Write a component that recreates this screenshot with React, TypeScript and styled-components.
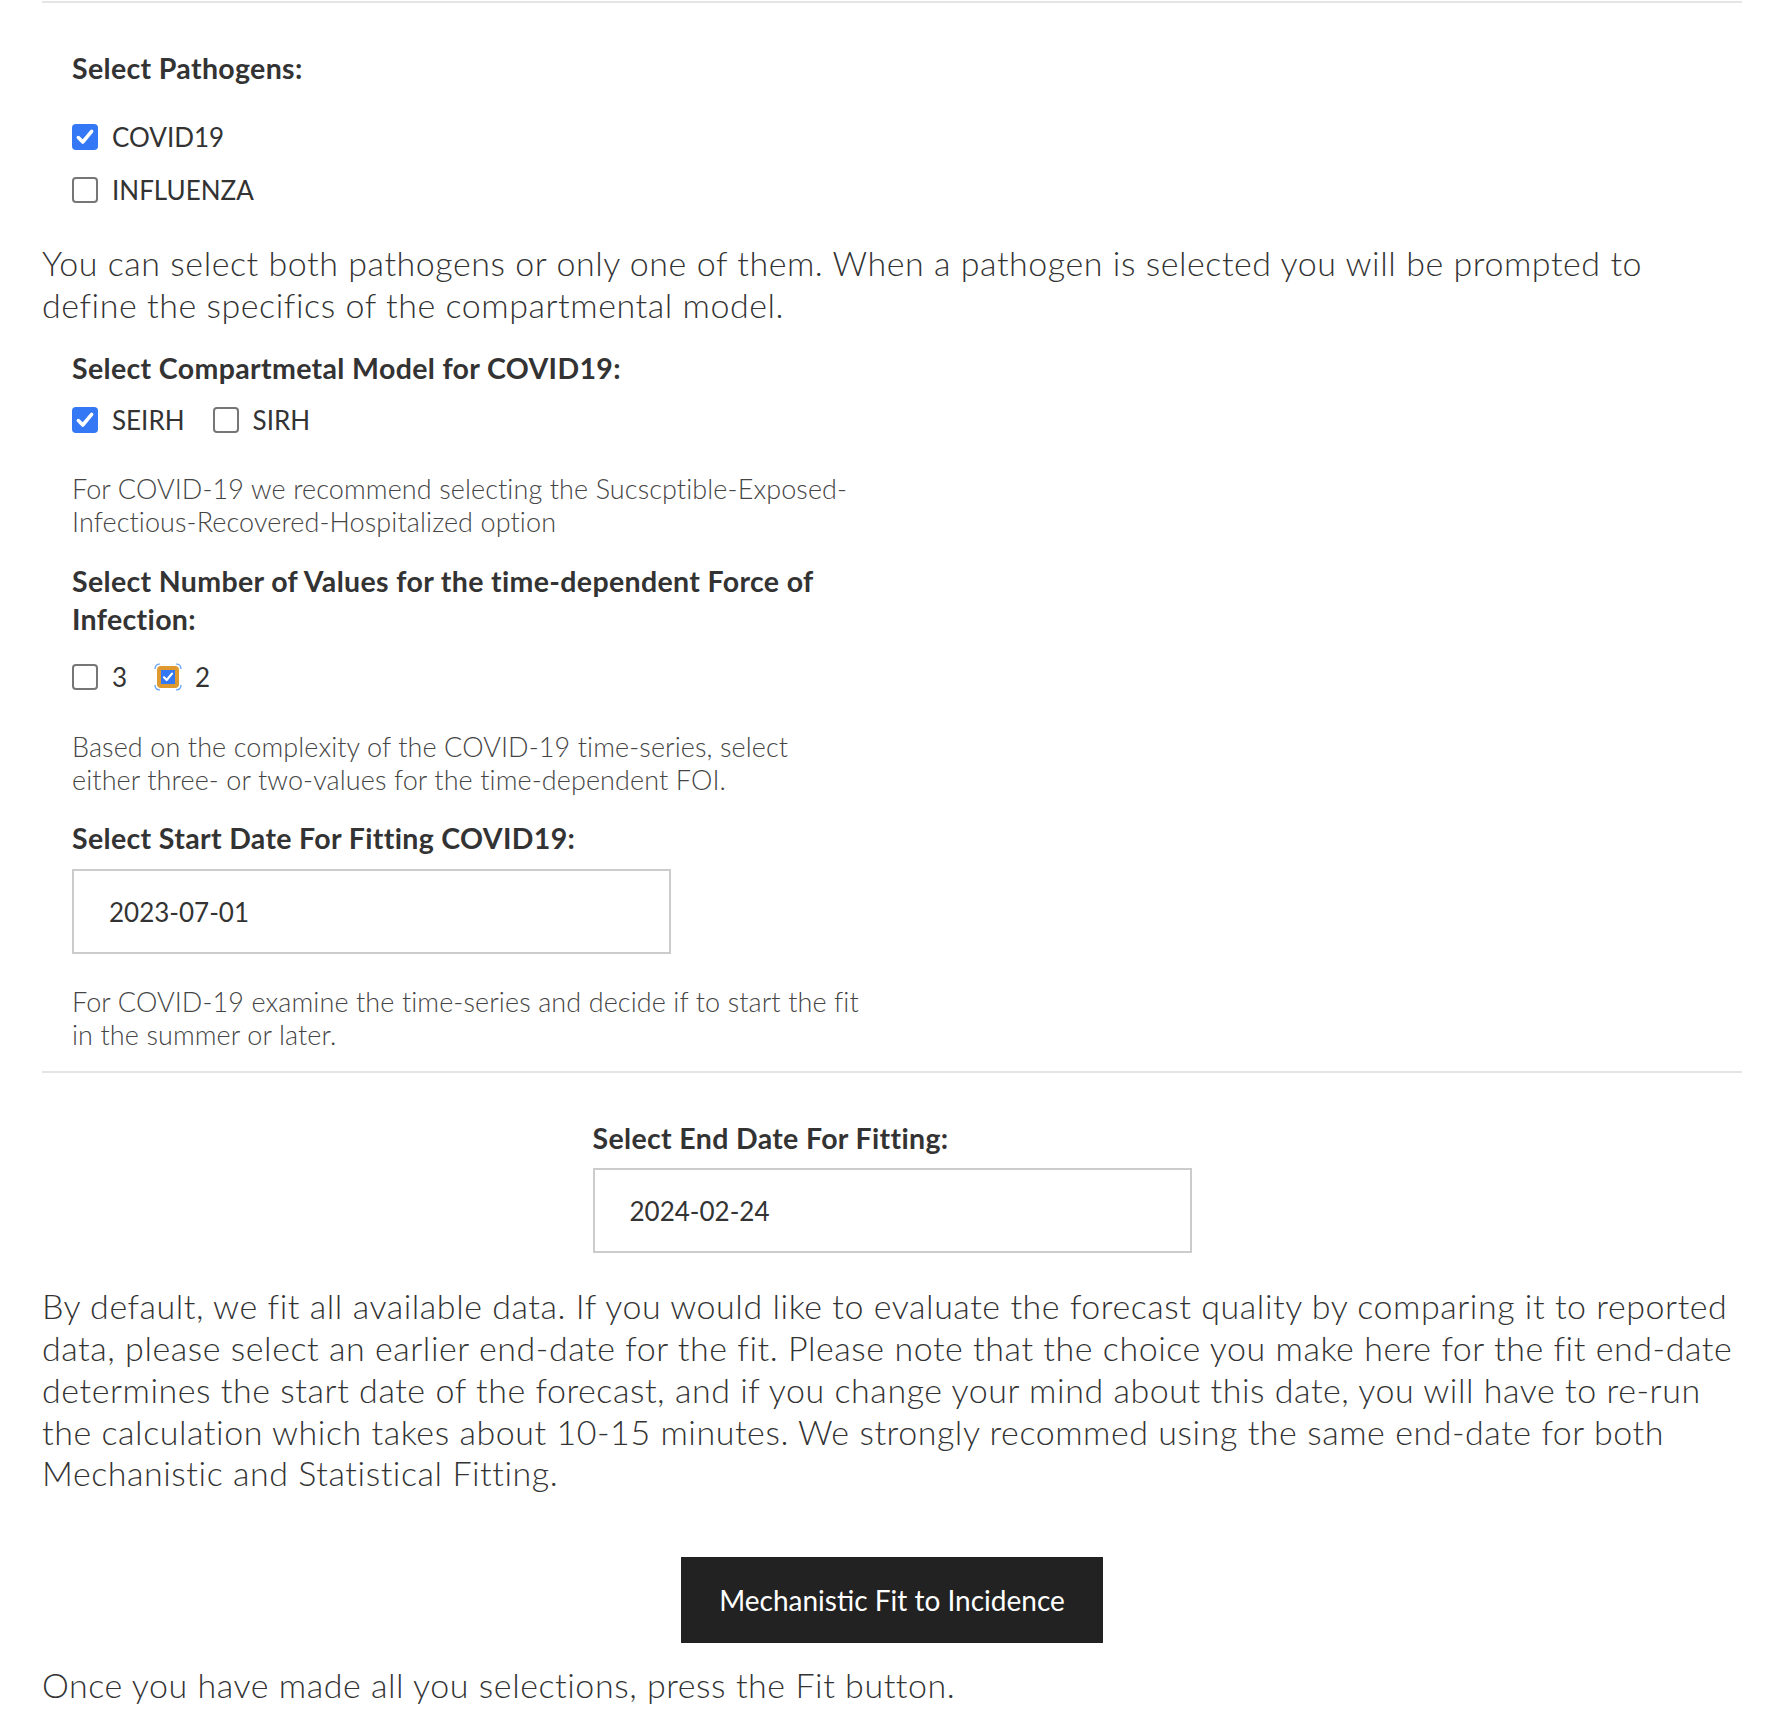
import React from "react";
import styled, { createGlobalStyle } from "styled-components";

const GlobalStyle = createGlobalStyle`
  html, body { margin: 0; padding: 0; background: #ffffff; }
  body { font-family: Lato, "Liberation Sans", sans-serif; color: #333333; }
  * { box-sizing: border-box; }
`;

const Page = styled.div`
  width: 1700px;
  margin-left: 42px;
  padding-top: 1px;
  padding-bottom: 8px;
`;

const Rule = styled.div<{ $mt: number }>`
  height: 2px;
  background: #e5e5e5;
  margin-top: ${(p) => p.$mt}px;
`;

const Panel = styled.div`
  padding-left: 30px;
  width: 880px;
`;

const Centered = styled.div`
  width: 599px;
  margin: 0 auto;
`;

const Heading = styled.div<{ $mt: number }>`
  font-weight: 700;
  font-size: 28.5px;
  letter-spacing: 0.35px;
  line-height: 38px;
  color: #333333;
  white-space: nowrap;
  margin-top: ${(p) => p.$mt}px;
`;

const Lead = styled.p<{ $mt: number }>`
  margin: ${(p) => p.$mt}px 0 0;
  font-weight: 300;
  font-size: 34px;
  letter-spacing: 0.55px;
  line-height: 41.7px;
  color: #333333;
  white-space: nowrap;
`;

const Note = styled.p<{ $mt: number }>`
  margin: ${(p) => p.$mt}px 0 0;
  font-weight: 300;
  font-size: 27px;
  letter-spacing: 0.1px;
  line-height: 33px;
  color: #454545;
  white-space: nowrap;
`;

const CheckList = styled.div<{ $mt: number; $inline?: boolean }>`
  display: flex;
  flex-direction: ${(p) => (p.$inline ? "row" : "column")};
  gap: ${(p) => (p.$inline ? "28px" : "13px")};
  margin-top: ${(p) => p.$mt}px;
`;

const CheckItem = styled.label`
  display: flex;
  align-items: center;
  gap: 14px;
  height: 40px;
  font-size: 26px;
  font-weight: 400;
  color: #333333;
`;

const Box = styled.span<{ $checked: boolean }>`
  position: relative;
  width: 26px;
  height: 26px;
  flex: none;
  border-radius: 4px;
  border: ${(p) => (p.$checked ? "none" : "2.5px solid #767676")};
  background: ${(p) => (p.$checked ? "#3478f6" : "#ffffff")};
  display: flex;
  align-items: center;
  justify-content: center;
`;

const FocusSlot = styled.span`
  position: relative;
  width: 26px;
  height: 26px;
  flex: none;
  display: flex;
  align-items: center;
  justify-content: center;
`;

const FocusBox = styled.span`
  width: 22px;
  height: 22px;
  border-radius: 4px;
  background: #3478f6;
  border: 4px solid #e0992f;
  display: flex;
  align-items: center;
  justify-content: center;
`;

const Ring = styled.svg`
  position: absolute;
  left: -1px;
  top: -1px;
`;

const DateInput = styled.div<{ $mt: number }>`
  width: 599px;
  height: 85px;
  margin-top: ${(p) => p.$mt}px;
  border: 2px solid #cccccc;
  padding-left: 35px;
  display: flex;
  align-items: center;
  font-size: 26px;
  font-weight: 400;
  color: #333333;
`;

const ButtonRow = styled.div<{ $mt: number }>`
  display: flex;
  justify-content: center;
  margin-top: ${(p) => p.$mt}px;
`;

const FitButton = styled.button`
  width: 422px;
  height: 86px;
  background: #222222;
  color: #ffffff;
  border: none;
  font-family: Lato, "Liberation Sans", sans-serif;
  font-size: 28px;
  font-weight: 400;
  cursor: pointer;
`;

const Check = ({ size = 20 }: { size?: number }) => (
  <svg width={size} height={size} viewBox="0 0 18 18">
    <path d="M3 9.5 L7 13.5 L15 4" fill="none" stroke="#ffffff" strokeWidth="3.2" strokeLinecap="round" strokeLinejoin="round" />
  </svg>
);

const Checkbox = ({ label, checked, focused }: { label: string; checked?: boolean; focused?: boolean }) => (
  <CheckItem>
    {focused ? (
      <FocusSlot>
        <FocusBox>
          <Check size={12} />
        </FocusBox>
        <Ring width="28" height="28" viewBox="0 0 28 28">
          <g fill="none" stroke="#5a9af7" strokeWidth="1.2">
            <path d="M1 6 Q1 1 6 1" />
            <path d="M22 1 Q27 1 27 6" />
            <path d="M27 22 Q27 27 22 27" />
            <path d="M6 27 Q1 27 1 22" />
          </g>
        </Ring>
      </FocusSlot>
    ) : (
      <Box $checked={!!checked}>{checked && <Check />}</Box>
    )}
    {label}
  </CheckItem>
);

export default function App() {
  return (
    <>
      <GlobalStyle />
      <Page>
        <Rule $mt={0} />
        <Panel>
          <Heading $mt={46}>Select Pathogens:</Heading>
          <CheckList $mt={30}>
            <Checkbox label="COVID19" checked />
            <Checkbox label="INFLUENZA" />
          </CheckList>
        </Panel>
        <Lead $mt={32}>
          You can select both pathogens or only one of them. When a pathogen is selected you will be prompted to
          <br />
          define the specifics of the compartmental model.
        </Lead>
        <Panel>
          <Heading $mt={24}>Select Compartmetal Model for COVID19:</Heading>
          <CheckList $mt={13} $inline>
            <Checkbox label="SEIRH" checked />
            <Checkbox label="SIRH" />
          </CheckList>
          <Note $mt={32}>
            For COVID-19 we recommend selecting the Sucscptible-Exposed-
            <br />
            Infectious-Recovered-Hospitalized option
          </Note>
          <Heading $mt={24}>
            Select Number of Values for the time-dependent Force of
            <br />
            Infection:
          </Heading>
          <CheckList $mt={19} $inline>
            <Checkbox label="3" />
            <Checkbox label="2" focused />
          </CheckList>
          <Note $mt={33}>
            Based on the complexity of the COVID-19 time-series, select
            <br />
            either three- or two-values for the time-dependent FOI.
          </Note>
          <Heading $mt={23}>Select Start Date For Fitting COVID19:</Heading>
          <DateInput $mt={12}>2023-07-01</DateInput>
          <Note $mt={31}>
            For COVID-19 examine the time-series and decide if to start the fit
            <br />
            in the summer or later.
          </Note>
        </Panel>
        <Rule $mt={20} />
        <Centered>
          <Heading $mt={46}>Select End Date For Fitting:</Heading>
          <DateInput $mt={11}>2024-02-24</DateInput>
        </Centered>
        <Lead $mt={32}>
          By default, we fit all available data. If you would like to evaluate the forecast quality by comparing it to reported
          <br />
          data, please select an earlier end-date for the fit. Please note that the choice you make here for the fit end-date
          <br />
          determines the start date of the forecast, and if you change your mind about this date, you will have to re-run
          <br />
          the calculation which takes about 10-15 minutes. We strongly recommed using the same end-date for both
          <br />
          Mechanistic and Statistical Fitting.
        </Lead>
        <ButtonRow $mt={63}>
          <FitButton>Mechanistic Fit to Incidence</FitButton>
        </ButtonRow>
        <Lead $mt={21}>Once you have made all you selections, press the Fit button.</Lead>
      </Page>
    </>
  );
}
